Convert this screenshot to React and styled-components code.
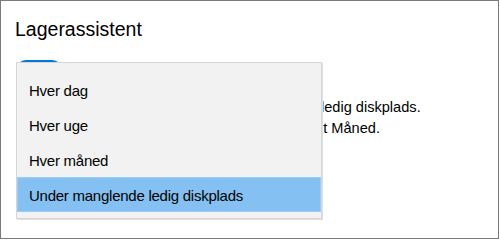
import React from "react";
import styled, { createGlobalStyle } from "styled-components";

const GlobalStyle = createGlobalStyle`
  html, body {
    margin: 0;
    padding: 0;
    background: #ffffff;
  }
  body {
    font-family: "Liberation Sans", Arial, sans-serif;
    color: #000;
  }
`;

const Frame = styled.div`
  position: relative;
  box-sizing: border-box;
  width: 499px;
  height: 239px;
  border: 1px solid #7a7a7a;
  padding: 16px 0 0 14px;
  overflow: hidden;
  background: #fff;
`;

const Title = styled.h1`
  margin: 0;
  font-size: 19.5px;
  line-height: 24px;
  font-weight: 400;
`;

const ToggleRow = styled.div`
  display: flex;
  align-items: center;
  gap: 12px;
  margin: 19px 0 0 1px;
  font-size: 14.6px;
`;

const Toggle = styled.div`
  box-sizing: border-box;
  width: 46px;
  height: 20px;
  border-radius: 10px;
  background: #0078d7;
  display: flex;
  align-items: center;
  justify-content: flex-end;
  padding: 0 5px;

  &::after {
    content: "";
    width: 10px;
    height: 10px;
    border-radius: 50%;
    background: #fff;
  }
`;

const Paragraph = styled.div`
  margin-top: 17px;
  font-size: 14.6px;
  line-height: 21px;
`;

const Line = styled.div`
  white-space: nowrap;
  margin-left: ${(p) => p.indent}px;
`;

const Menu = styled.ul`
  position: absolute;
  left: 15px;
  top: 61px;
  box-sizing: border-box;
  width: 306px;
  height: 157px;
  margin: 0;
  padding: 9px 0 6px;
  list-style: none;
  background: #f2f2f2;
  border: 1px solid #d6d6d6;
  box-shadow: 1px 1px 0 #e0e0e0;
`;

const Item = styled.li`
  box-sizing: border-box;
  height: 35px;
  padding: 3px 0 0 12px;
  font-size: 15px;
  line-height: 32px;
  letter-spacing: -0.25px;
  white-space: nowrap;
  background: ${(p) => (p.selected ? "#84c0f1" : "transparent")};
  outline: ${(p) => (p.selected ? "1px solid #9ccdf5" : "none")};
  outline-offset: -1px;
`;

const options = [
  "Hver dag",
  "Hver uge",
  "Hver måned",
  "Under manglende ledig diskplads",
];

export default function App() {
  return (
    <>
      <GlobalStyle />
      <Frame>
        <Title>Lagerassistent</Title>
        <ToggleRow>
          <Toggle />
          <span>Til</span>
        </ToggleRow>
        <Paragraph>
          <Line indent={22}>Lagerassistent kører, når der er manglende ledig diskplads.</Line>
          <Line indent={103}>Der er ryddet 0 byte plads i sidst Måned.</Line>
        </Paragraph>
        <Menu>
          {options.map((o, i) => (
            <Item key={o} selected={i === options.length - 1}>
              {o}
            </Item>
          ))}
        </Menu>
      </Frame>
    </>
  );
}
